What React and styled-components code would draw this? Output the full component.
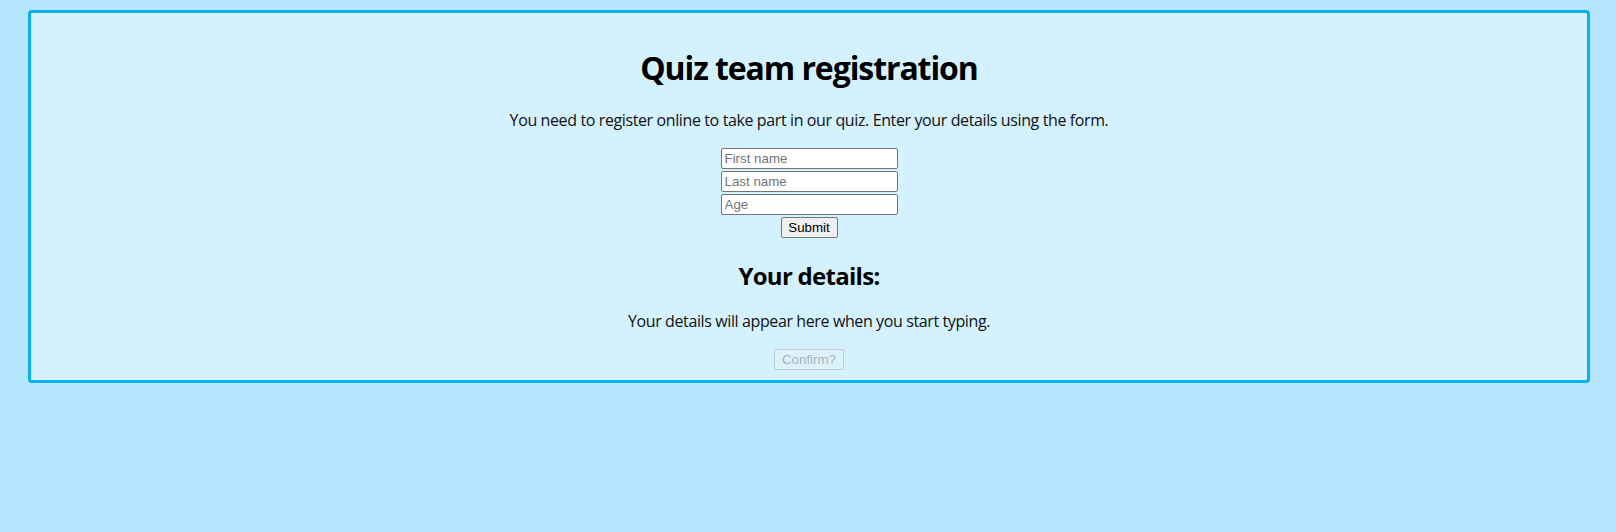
import React from "react";
import styled, { createGlobalStyle } from "styled-components";

const Global = createGlobalStyle`
  html, body { margin: 0; padding: 0; }
  body {
    background: #b3e5fc;
    font-family: "Open Sans", "Noto Sans", sans-serif;
    color: #000;
  }
`;

const Card = styled.main`
  margin: 10px 26px 0 28px;
  background: #d4f2fe;
  border: 3px solid #0bb0f2;
  border-radius: 4px;
  padding: 33px 0 10px;
  display: flex;
  flex-direction: column;
  align-items: center;
  text-align: center;
`;

const Title = styled.h1`
  margin: 0;
  font-size: 32px;
  line-height: 43px;
  font-weight: 700;
  letter-spacing: -0.034em;
`;

const Text = styled.p`
  margin: ${(p) => p.$top}px 0 0;
  font-size: 16px;
  line-height: 21px;
  color: #111;
  letter-spacing: -0.024em;
`;

const Form = styled.form`
  margin-top: ${(p) => p.$top}px;
  display: flex;
  flex-direction: column;
  align-items: center;
  gap: 2px;
`;

const Field = styled.input`
  box-sizing: border-box;
  width: 177px;
  height: 21px;
  margin: 0;
  padding: 1px 3px;
  border: 1px solid #767676;
  border-radius: 2px;
  background: #fff;
  font-family: "Liberation Sans", Arial, sans-serif;
  font-size: 13.33px;
  &::placeholder { color: #757575; }
`;

const Button = styled.button`
  box-sizing: border-box;
  height: 21px;
  width: ${(p) => p.$w}px;
  margin: ${(p) => p.$top || 0}px 0 0;
  padding: 0 6px;
  border: 1px solid #767676;
  border-radius: 2px;
  background: #efefef;
  color: #000;
  font-family: "Liberation Sans", Arial, sans-serif;
  font-size: 13.33px;
  &:disabled {
    color: rgba(16, 16, 16, 0.3);
    border-color: rgba(118, 118, 118, 0.3);
    background: rgba(239, 239, 239, 0.3);
  }
`;

const Subtitle = styled.h2`
  margin: 22px 0 0;
  font-size: 24px;
  line-height: 32px;
  font-weight: 700;
  letter-spacing: -0.03em;
`;

export default function App() {
  return (
    <>
      <Global />
      <Card>
        <Title>Quiz team registration</Title>
        <Text $top={21}>
          You need to register online to take part in our quiz. Enter your details using the form.
        </Text>
        <Form $top={17} onSubmit={(e) => e.preventDefault()}>
          <Field type="text" placeholder="First name" />
          <Field type="text" placeholder="Last name" />
          <Field type="number" placeholder="Age" />
          <Button type="submit" $w={57}>Submit</Button>
        </Form>
        <Subtitle>Your details:</Subtitle>
        <Text $top={19}>Your details will appear here when you start typing.</Text>
        <Button type="button" disabled $w={70} $top={17}>Confirm?</Button>
      </Card>
    </>
  );
}
